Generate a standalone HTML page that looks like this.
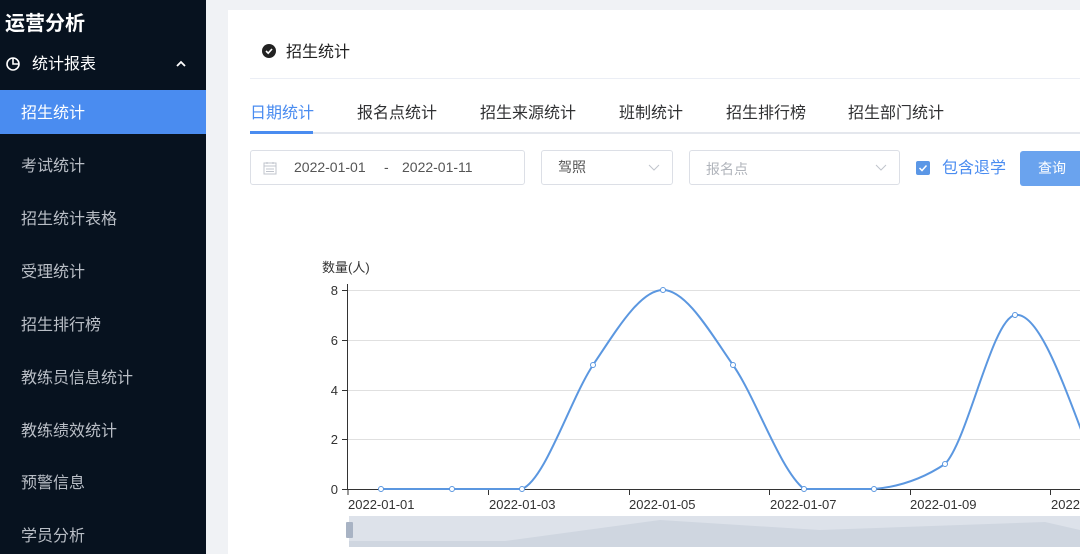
<!DOCTYPE html>
<html><head><meta charset="utf-8"><style>
*{margin:0;padding:0;box-sizing:border-box}
html,body{width:1080px;height:554px;overflow:hidden}
body{background:#f0f2f5;font-family:"Liberation Sans","Noto Sans CJK SC",sans-serif;position:relative;line-height:1.2}
.side{position:absolute;left:0;top:0;width:206px;height:554px;background:#07121f;color:#fff}
.abs{position:absolute}
.item{position:absolute;left:21px;font-size:16px;color:#b9bec6}
.card{position:absolute;left:228px;top:10px;width:852px;height:544px;background:#fff}
.box{position:absolute;top:150px;height:35px;border:1px solid #dcdfe6;border-radius:3px;background:#fff;font-size:14px;color:#555}
.tab{position:absolute;top:104px;font-size:16px;color:#303133}
</style></head><body>
<div class="side">
<div class="abs" style="left:5px;top:12px;font-size:20px;font-weight:bold">运营分析</div>
<svg class="abs" style="left:5px;top:56px" width="16" height="16" viewBox="0 0 16 16"><circle cx="8" cy="8" r="6" fill="none" stroke="#fff" stroke-width="1.6"/><path d="M8 2V8H14" fill="none" stroke="#fff" stroke-width="1.6"/></svg>
<div class="abs" style="left:32px;top:55px;font-size:16px">统计报表</div>
<svg class="abs" style="left:175px;top:60px" width="12" height="8"><path d="M2 6L6 2L10 6" fill="none" stroke="#fff" stroke-width="1.8"/></svg>
<div class="abs" style="left:0;top:90px;width:206px;height:44px;background:#4a8cf0"></div>
<div class="item" style="top:104px;color:#fff">招生统计</div>
<div class="item" style="top:157px">考试统计</div>
<div class="item" style="top:210px">招生统计表格</div>
<div class="item" style="top:263px">受理统计</div>
<div class="item" style="top:316px">招生排行榜</div>
<div class="item" style="top:369px">教练员信息统计</div>
<div class="item" style="top:422px">教练绩效统计</div>
<div class="item" style="top:474px">预警信息</div>
<div class="item" style="top:527px">学员分析</div>
</div>
<div class="card"></div>
<svg class="abs" style="left:262px;top:44px" width="14" height="14"><circle cx="7" cy="7" r="7" fill="#222"/><path d="M4 7L6.2 9.2L10 5" fill="none" stroke="#fff" stroke-width="1.6"/></svg>
<div class="abs" style="left:286px;top:43px;font-size:16px;color:#222">招生统计</div>
<div class="abs" style="left:250px;top:78px;width:830px;height:1px;background:#ebeef5"></div>
<div class="tab" style="left:250px;color:#4a8cf0">日期统计</div>
<div class="tab" style="left:357px">报名点统计</div>
<div class="tab" style="left:480px">招生来源统计</div>
<div class="tab" style="left:619px">班制统计</div>
<div class="tab" style="left:726px">招生排行榜</div>
<div class="tab" style="left:848px">招生部门统计</div>
<div class="abs" style="left:250px;top:132px;width:830px;height:2px;background:#e4e7ed"></div>
<div class="abs" style="left:250px;top:131px;width:63px;height:3px;background:#4a8cf0"></div>
<div class="box" style="left:250px;width:275px"><svg class="abs" style="left:12px;top:10px" width="14" height="14"><rect x="1" y="2" width="12" height="11" fill="none" stroke="#c0c4cc"/><path d="M1 5H13M4 1V3M10 1V3M3 8H11M3 10.5H11" stroke="#c0c4cc"/></svg><span class="abs" style="left:43px;top:8px">2022-01-01</span><span class="abs" style="left:133px;top:8px">-</span><span class="abs" style="left:151px;top:8px">2022-01-11</span></div>
<div class="box" style="left:541px;width:132px"><span class="abs" style="left:16px;top:8px">驾照</span><svg class="abs" style="left:106px;top:13px" width="12" height="8"><path d="M1 1L6 6L11 1" fill="none" stroke="#c0c4cc"/></svg></div>
<div class="box" style="left:689px;width:211px"><span class="abs" style="left:16px;top:10px;color:#b0b4bb">报名点</span><svg class="abs" style="left:185px;top:13px" width="12" height="8"><path d="M1 1L6 6L11 1" fill="none" stroke="#c0c4cc"/></svg></div>
<div class="abs" style="left:916px;top:161px;width:14px;height:14px;background:#5b97e6;border-radius:2px"><svg width="14" height="14"><path d="M3.5 7L6 9.5L10.5 4.5" fill="none" stroke="#fff" stroke-width="1.5"/></svg></div>
<div class="abs" style="left:942px;top:159px;font-size:16px;color:#4a8cf0">包含退学</div>
<div class="abs" style="left:1020px;top:151px;width:70px;height:35px;background:#6aa3ee;border-radius:3px;color:#fff;font-size:14px;padding:9px 0 0 18px">查询</div>
<svg class="abs" style="left:0;top:0" width="1080" height="554" font-family="Liberation Sans, Noto Sans CJK SC, sans-serif">
<text x="322" y="272" font-size="13" fill="#333">数量(人)</text>
<g stroke="#e0e0e0" stroke-width="1"><line x1="348" y1="290.5" x2="1080" y2="290.5"/><line x1="348" y1="340.5" x2="1080" y2="340.5"/><line x1="348" y1="390.5" x2="1080" y2="390.5"/><line x1="348" y1="439.5" x2="1080" y2="439.5"/></g>
<g stroke="#333" stroke-width="1"><line x1="347.5" y1="284" x2="347.5" y2="489"/><line x1="347.5" y1="489.5" x2="1080" y2="489.5"/>
<line x1="342" y1="290.5" x2="348" y2="290.5"/><line x1="342" y1="340.5" x2="348" y2="340.5"/><line x1="342" y1="390.5" x2="348" y2="390.5"/><line x1="342" y1="439.5" x2="348" y2="439.5"/><line x1="342" y1="489.5" x2="348" y2="489.5"/>
<line x1="348" y1="489" x2="348" y2="495"/><line x1="488.5" y1="489" x2="488.5" y2="495"/><line x1="629.5" y1="489" x2="629.5" y2="495"/><line x1="769.5" y1="489" x2="769.5" y2="495"/><line x1="910.5" y1="489" x2="910.5" y2="495"/><line x1="1050.5" y1="489" x2="1050.5" y2="495"/></g>
<g font-size="13" fill="#333" text-anchor="end"><text x="338" y="295">8</text><text x="338" y="345">6</text><text x="338" y="395">4</text><text x="338" y="444">2</text><text x="338" y="494">0</text></g>
<g font-size="13" fill="#333"><text x="348" y="509">2022-01-01</text><text x="489" y="509">2022-01-03</text><text x="629" y="509">2022-01-05</text><text x="770" y="509">2022-01-07</text><text x="910" y="509">2022-01-09</text><text x="1051" y="509">2022-01-11</text></g>
<path d="M381 489L522 489C545 480 570 400 593 365C616 331 640 290 663 290C686 290 710 332 733 365C756 398 780 470 804 489L874 489C897 487 921 480 945 464C968 440 992 319 1015 315C1038 311 1062 380 1085 440" fill="none" stroke="#5b97e0" stroke-width="2"/>
<g fill="#fff" stroke="#5b97e0" stroke-width="1"><circle cx="381" cy="489" r="2.5"/><circle cx="452" cy="489" r="2.5"/><circle cx="522" cy="489" r="2.5"/><circle cx="593" cy="365" r="2.5"/><circle cx="663" cy="290" r="2.5"/><circle cx="733" cy="365" r="2.5"/><circle cx="804" cy="489" r="2.5"/><circle cx="874" cy="489" r="2.5"/><circle cx="945" cy="464" r="2.5"/><circle cx="1015" cy="315" r="2.5"/></g>
<rect x="349" y="516" width="731" height="31" fill="#dde2ea"/>
<path d="M349 541L505 541L660 520L820 530L1045 522L1080 530L1080 547L349 547Z" fill="#cfd6e0"/>
<rect x="346" y="522" width="7" height="16" rx="1" fill="#a8b3c4"/>
</svg>
</body></html>
